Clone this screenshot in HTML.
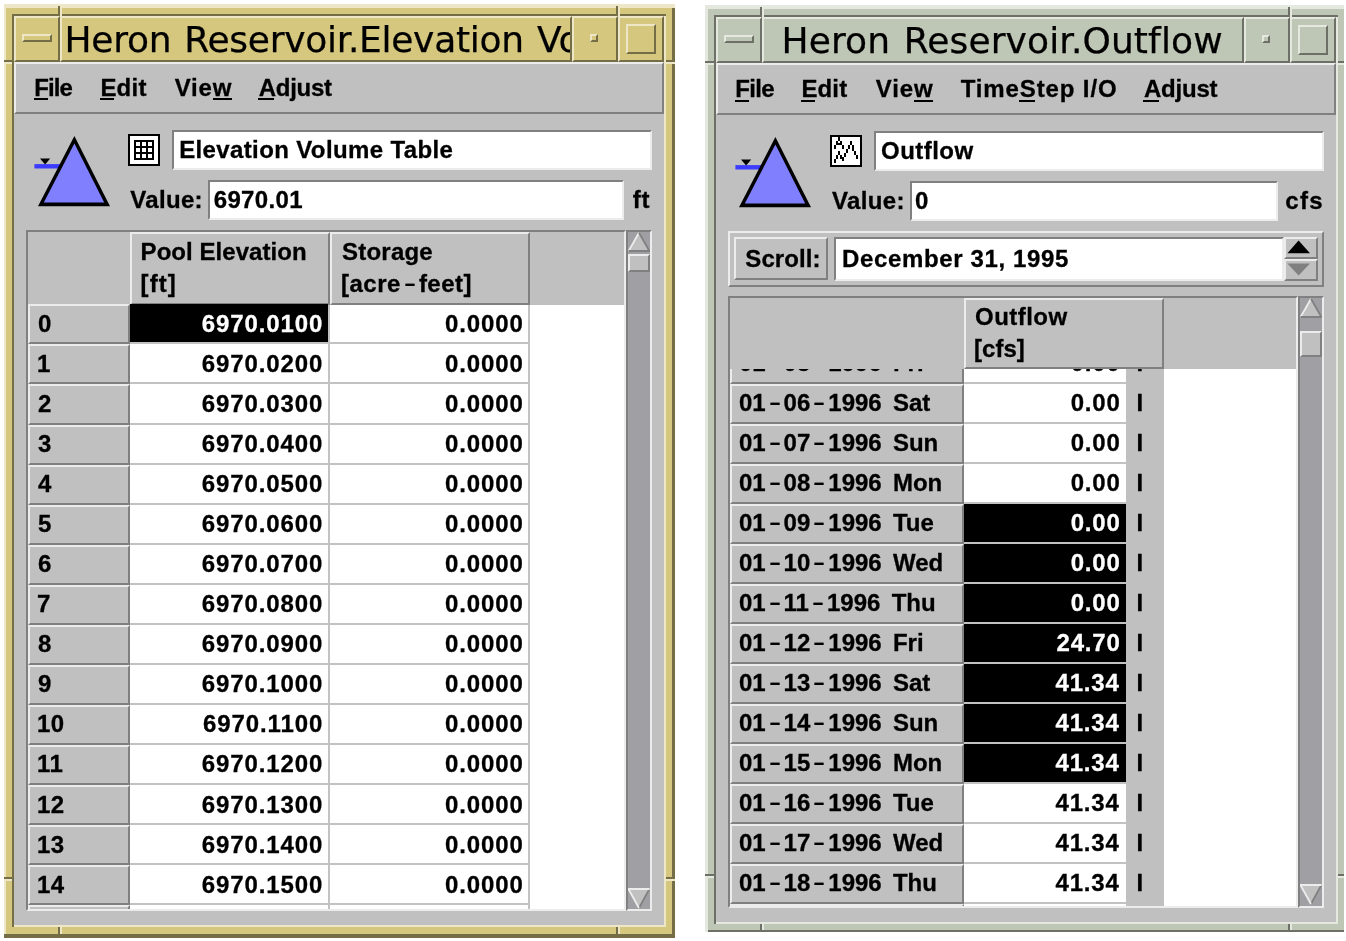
<!DOCTYPE html>
<html lang="en"><head><meta charset="utf-8"><title>Heron Reservoir</title>
<style>
html,body{margin:0;padding:0;background:#fff}
body{width:1346px;height:941px;position:relative;overflow:hidden}
div,svg.a,span.t{position:absolute;box-sizing:border-box}
.fA{background:#d6c77e}.lA{background:#ede7c7}.dA{background:#746d45}
.rbA{background:#d6c77e;border:2px solid;border-color:#ede7c7 #746d45 #746d45 #ede7c7}
.fB{background:#bec6b5}.lB{background:#e4e8df}.dB{background:#6c7067}
.rbB{background:#bec6b5;border:2px solid;border-color:#e4e8df #6c7067 #6c7067 #e4e8df}
.g{background:#c0c0c0}.w{background:#fff}.k{background:#000}.gl{background:#c2c2c2}
.rs{background:#c0c0c0;border:2px solid;border-color:#ececec #808080 #808080 #ececec}
.nob{border-bottom:0}
.fld{background:#fff;border:2px solid;border-color:#808080 #ececec #ececec #808080}
.tb{border:2px solid;border-color:#808080 #ececec #ececec #808080}
.sb{background:#a0a0a4;border:2px solid;border-color:#808080 #ececec #ececec #808080}
.ib{background:#fff;border:2px solid #000}
.t{font:bold 24px/24px "Liberation Sans",sans-serif;color:#000;white-space:pre;-webkit-text-stroke:0.3px #000}
.wt{color:#fff;-webkit-text-stroke-color:#fff}
.h{display:inline-block;font-weight:bold;width:18px;text-align:center;letter-spacing:0;transform:scale(1.45,.78)}
.tt{overflow:hidden}
.ttx{position:absolute;font:36px/40px "DejaVu Sans",sans-serif;color:#000;white-space:pre;-webkit-text-stroke:0.25px #000}
.clip{overflow:hidden}
.win{left:0;top:0;width:0;height:0}
.desk{left:0;top:0;width:1346px;height:941px;background:#fff;will-change:transform}
</style></head>
<body>
<div class="desk">
<div class="win" id="win-elevation">
<div class="fA" style="left:4px;top:4px;width:671px;height:934px;"></div>
<div class="lA" style="left:4px;top:4px;width:671px;height:4px;"></div>
<div class="lA" style="left:4px;top:4px;width:2px;height:934px;"></div>
<div class="dA" style="left:672px;top:8px;width:3px;height:930px;"></div>
<div class="dA" style="left:4px;top:934px;width:671px;height:4px;"></div>
<div class="dA" style="left:12px;top:14px;width:654px;height:2px;"></div>
<div class="dA" style="left:12px;top:14px;width:2px;height:913px;"></div>
<div class="lA" style="left:664px;top:16px;width:2px;height:911px;"></div>
<div class="lA" style="left:14px;top:925px;width:652px;height:2px;"></div>
<div class="dA" style="left:58px;top:6px;width:2px;height:10px;"></div>
<div class="lA" style="left:60px;top:8px;width:2px;height:8px;"></div>
<div class="dA" style="left:58px;top:927px;width:2px;height:9px;"></div>
<div class="lA" style="left:60px;top:927px;width:2px;height:7px;"></div>
<div class="dA" style="left:616px;top:6px;width:2px;height:10px;"></div>
<div class="lA" style="left:618px;top:8px;width:2px;height:8px;"></div>
<div class="dA" style="left:616px;top:927px;width:2px;height:9px;"></div>
<div class="lA" style="left:618px;top:927px;width:2px;height:7px;"></div>
<div class="dA" style="left:4px;top:60px;width:8px;height:2px;"></div>
<div class="lA" style="left:6px;top:62px;width:6px;height:2px;"></div>
<div class="dA" style="left:666px;top:60px;width:9px;height:2px;"></div>
<div class="lA" style="left:666px;top:62px;width:9px;height:2px;"></div>
<div class="dA" style="left:4px;top:877px;width:8px;height:2px;"></div>
<div class="lA" style="left:6px;top:879px;width:6px;height:2px;"></div>
<div class="dA" style="left:666px;top:877px;width:9px;height:2px;"></div>
<div class="lA" style="left:666px;top:879px;width:9px;height:2px;"></div>
<div class="rbA" style="left:14px;top:16px;width:46px;height:46px;"></div>
<div class="rbA" style="left:22px;top:34px;width:30px;height:8px;"></div>
<div class="rbA" style="left:60px;top:16px;width:512px;height:46px;"></div>
<div class="rbA" style="left:572px;top:16px;width:46px;height:46px;"></div>
<div class="rbA" style="left:590px;top:34px;width:8px;height:8px;"></div>
<div class="rbA" style="left:618px;top:16px;width:46px;height:46px;"></div>
<div class="rbA" style="left:626px;top:24px;width:30px;height:30px;"></div>
<div class="g" style="left:14px;top:62px;width:650px;height:863px;"></div>
<div class="tt" style="left:62px;top:18px;width:508px;height:42px"><span class="ttx" style="left:2.5px;top:2px;letter-spacing:-0.28px;word-spacing:2px">Heron Reservoir.Elevation Volume Table</span></div>
<div class="rs" style="left:14px;top:62px;width:650px;height:52px;"></div>
<span class="t" style="left:34.30px;top:76.00px;letter-spacing:-0.97px;">File</span>
<div class="k" style="left:34.4px;top:98px;width:13.4px;height:2px;"></div>
<span class="t" style="left:100.40px;top:76.00px;letter-spacing:0.22px;">Edit</span>
<div class="k" style="left:100.4px;top:98px;width:14.0px;height:2px;"></div>
<span class="t" style="left:174.70px;top:76.00px;letter-spacing:0.84px;">View</span>
<div class="k" style="left:213px;top:98px;width:18.8px;height:2px;"></div>
<span class="t" style="left:258.80px;top:76.00px;letter-spacing:-0.29px;">Adjust</span>
<div class="k" style="left:257.8px;top:98px;width:16.2px;height:2px;"></div>
<svg class="a" style="left:34px;top:130px" width="84" height="80" viewBox="0 0 84 80">
<rect x="0.4" y="34.1" width="26" height="4.4" fill="#3c3cff"/>
<polygon points="40.4,6 76,76.3 4,76.3" fill="#000"/>
<polygon points="40.4,13.4 70.2,72.5 9.8,72.5" fill="#8080ff"/>
<polygon points="6,28.4 16.2,28.4 11.1,34.5" fill="#000"/>
</svg>
<div class="ib" style="left:128px;top:134px;width:32px;height:32px;"></div>
<svg class="a" style="left:128px;top:134px" width="32" height="32"><rect x="6" y="6" width="2" height="20"/><rect x="6" y="6" width="20" height="2"/><rect x="12" y="6" width="2" height="20"/><rect x="6" y="12" width="20" height="2"/><rect x="18" y="6" width="2" height="20"/><rect x="6" y="18" width="20" height="2"/><rect x="24" y="6" width="2" height="20"/><rect x="6" y="24" width="20" height="2"/></svg>
<div class="fld" style="left:172px;top:130px;width:480px;height:40px;"></div>
<span class="t" style="left:179.20px;top:138.00px;letter-spacing:0.37px;">Elevation Volume Table</span>
<span class="t" style="left:130.30px;top:188.00px;letter-spacing:0.32px;">Value:</span>
<div class="fld" style="left:208px;top:180.4px;width:416px;height:40.0px;"></div>
<span class="t" style="left:213.70px;top:188.00px;letter-spacing:0.37px;">6970.01</span>
<span class="t" style="left:632.80px;top:188.00px;letter-spacing:0.80px;">ft</span>
<div class="tb" style="left:26px;top:230px;width:600px;height:681px;"></div>
<div class="g" style="left:28px;top:232px;width:596px;height:73px;"></div>
<div class="w" style="left:130px;top:305px;width:494px;height:604px;"></div>
<div class="rs" style="left:130px;top:232px;width:200px;height:73px;"></div>
<div class="rs" style="left:330px;top:232px;width:200px;height:73px;"></div>
<span class="t" style="left:140.60px;top:240.00px;letter-spacing:0.05px;">Pool Elevation</span>
<span class="t" style="left:140.60px;top:272.00px;letter-spacing:1.04px;">[ft]</span>
<span class="t" style="left:342.00px;top:240.00px;letter-spacing:0.22px;">Storage</span>
<span class="t" style="left:341.00px;top:272.00px;letter-spacing:0.50px;">[acre<b class="h">-</b>feet]</span>
<div class="rs" style="left:28px;top:304.4px;width:102px;height:40.04px;"></div>
<div class="gl" style="left:130px;top:342.44px;width:400px;height:2.0px;"></div>
<span class="t" style="left:37.90px;top:312.00px;letter-spacing:0.60px;">0</span>
<div class="k" style="left:130px;top:304.4px;width:198px;height:38.04px;"></div>
<span class="t wt" style="left:201.70px;top:312.00px;letter-spacing:0.90px;">6970.0100</span>
<span class="t" style="left:445.04px;top:312.00px;letter-spacing:0.90px;">0.0000</span>
<div class="rs" style="left:28px;top:344.44px;width:102px;height:40.04px;"></div>
<div class="gl" style="left:130px;top:382.48px;width:400px;height:2.0px;"></div>
<span class="t" style="left:36.90px;top:352.04px;letter-spacing:0.60px;">1</span>
<span class="t" style="left:201.70px;top:352.04px;letter-spacing:0.90px;">6970.0200</span>
<span class="t" style="left:445.04px;top:352.04px;letter-spacing:0.90px;">0.0000</span>
<div class="rs" style="left:28px;top:384.49px;width:102px;height:40.04px;"></div>
<div class="gl" style="left:130px;top:422.53px;width:400px;height:2.0px;"></div>
<span class="t" style="left:37.90px;top:392.09px;letter-spacing:0.60px;">2</span>
<span class="t" style="left:201.70px;top:392.09px;letter-spacing:0.90px;">6970.0300</span>
<span class="t" style="left:445.04px;top:392.09px;letter-spacing:0.90px;">0.0000</span>
<div class="rs" style="left:28px;top:424.53px;width:102px;height:40.04px;"></div>
<div class="gl" style="left:130px;top:462.57px;width:400px;height:2.0px;"></div>
<span class="t" style="left:37.90px;top:432.13px;letter-spacing:0.60px;">3</span>
<span class="t" style="left:201.70px;top:432.13px;letter-spacing:0.90px;">6970.0400</span>
<span class="t" style="left:445.04px;top:432.13px;letter-spacing:0.90px;">0.0000</span>
<div class="rs" style="left:28px;top:464.57px;width:102px;height:40.04px;"></div>
<div class="gl" style="left:130px;top:502.61px;width:400px;height:2.0px;"></div>
<span class="t" style="left:37.90px;top:472.17px;letter-spacing:0.60px;">4</span>
<span class="t" style="left:201.70px;top:472.17px;letter-spacing:0.90px;">6970.0500</span>
<span class="t" style="left:445.04px;top:472.17px;letter-spacing:0.90px;">0.0000</span>
<div class="rs" style="left:28px;top:504.62px;width:102px;height:40.04px;"></div>
<div class="gl" style="left:130px;top:542.66px;width:400px;height:2.0px;"></div>
<span class="t" style="left:37.90px;top:512.22px;letter-spacing:0.60px;">5</span>
<span class="t" style="left:201.70px;top:512.22px;letter-spacing:0.90px;">6970.0600</span>
<span class="t" style="left:445.04px;top:512.22px;letter-spacing:0.90px;">0.0000</span>
<div class="rs" style="left:28px;top:544.66px;width:102px;height:40.04px;"></div>
<div class="gl" style="left:130px;top:582.7px;width:400px;height:2.0px;"></div>
<span class="t" style="left:37.90px;top:552.26px;letter-spacing:0.60px;">6</span>
<span class="t" style="left:201.70px;top:552.26px;letter-spacing:0.90px;">6970.0700</span>
<span class="t" style="left:445.04px;top:552.26px;letter-spacing:0.90px;">0.0000</span>
<div class="rs" style="left:28px;top:584.7px;width:102px;height:40.04px;"></div>
<div class="gl" style="left:130px;top:622.74px;width:400px;height:2.0px;"></div>
<span class="t" style="left:36.90px;top:592.30px;letter-spacing:0.60px;">7</span>
<span class="t" style="left:201.70px;top:592.30px;letter-spacing:0.90px;">6970.0800</span>
<span class="t" style="left:445.04px;top:592.30px;letter-spacing:0.90px;">0.0000</span>
<div class="rs" style="left:28px;top:624.74px;width:102px;height:40.04px;"></div>
<div class="gl" style="left:130px;top:662.78px;width:400px;height:2.0px;"></div>
<span class="t" style="left:37.90px;top:632.34px;letter-spacing:0.60px;">8</span>
<span class="t" style="left:201.70px;top:632.34px;letter-spacing:0.90px;">6970.0900</span>
<span class="t" style="left:445.04px;top:632.34px;letter-spacing:0.90px;">0.0000</span>
<div class="rs" style="left:28px;top:664.79px;width:102px;height:40.04px;"></div>
<div class="gl" style="left:130px;top:702.83px;width:400px;height:2.0px;"></div>
<span class="t" style="left:37.90px;top:672.39px;letter-spacing:0.60px;">9</span>
<span class="t" style="left:201.70px;top:672.39px;letter-spacing:0.90px;">6970.1000</span>
<span class="t" style="left:445.04px;top:672.39px;letter-spacing:0.90px;">0.0000</span>
<div class="rs" style="left:28px;top:704.83px;width:102px;height:40.04px;"></div>
<div class="gl" style="left:130px;top:742.87px;width:400px;height:2.0px;"></div>
<span class="t" style="left:36.90px;top:712.43px;letter-spacing:0.60px;">10</span>
<span class="t" style="left:203.02px;top:712.43px;letter-spacing:0.90px;">6970.1100</span>
<span class="t" style="left:445.04px;top:712.43px;letter-spacing:0.90px;">0.0000</span>
<div class="rs" style="left:28px;top:744.87px;width:102px;height:40.04px;"></div>
<div class="gl" style="left:130px;top:782.91px;width:400px;height:2.0px;"></div>
<span class="t" style="left:36.90px;top:752.47px;letter-spacing:0.60px;">11</span>
<span class="t" style="left:201.70px;top:752.47px;letter-spacing:0.90px;">6970.1200</span>
<span class="t" style="left:445.04px;top:752.47px;letter-spacing:0.90px;">0.0000</span>
<div class="rs" style="left:28px;top:784.92px;width:102px;height:40.04px;"></div>
<div class="gl" style="left:130px;top:822.96px;width:400px;height:2.0px;"></div>
<span class="t" style="left:36.90px;top:792.52px;letter-spacing:0.60px;">12</span>
<span class="t" style="left:201.70px;top:792.52px;letter-spacing:0.90px;">6970.1300</span>
<span class="t" style="left:445.04px;top:792.52px;letter-spacing:0.90px;">0.0000</span>
<div class="rs" style="left:28px;top:824.96px;width:102px;height:40.04px;"></div>
<div class="gl" style="left:130px;top:863.0px;width:400px;height:2.0px;"></div>
<span class="t" style="left:36.90px;top:832.56px;letter-spacing:0.60px;">13</span>
<span class="t" style="left:201.70px;top:832.56px;letter-spacing:0.90px;">6970.1400</span>
<span class="t" style="left:445.04px;top:832.56px;letter-spacing:0.90px;">0.0000</span>
<div class="rs" style="left:28px;top:865.0px;width:102px;height:40.04px;"></div>
<div class="gl" style="left:130px;top:903.04px;width:400px;height:2.0px;"></div>
<span class="t" style="left:36.90px;top:872.60px;letter-spacing:0.60px;">14</span>
<span class="t" style="left:201.70px;top:872.60px;letter-spacing:0.90px;">6970.1500</span>
<span class="t" style="left:445.04px;top:872.60px;letter-spacing:0.90px;">0.0000</span>
<div class="rs nob" style="left:28px;top:905.04px;width:102px;height:3.96px;"></div>
<div class="gl" style="left:328px;top:305px;width:2px;height:604px;"></div>
<div class="gl" style="left:528px;top:305px;width:2px;height:604px;"></div>
<div class="sb" style="left:626px;top:230px;width:26px;height:681px;"></div>
<svg class="a" style="left:628px;top:232px" width="22" height="20" viewBox="0 0 22 20">
<polygon points="11,0 22,19.4 0,19.4" fill="#c0c0c0"/>
<polyline points="0.6,19 11,0.8" fill="none" stroke="#ececec" stroke-width="1.8"/>
<polyline points="11,0.8 21.4,19 0.6,19" fill="none" stroke="#808080" stroke-width="1.8"/>
</svg>
<svg class="a" style="left:628px;top:888px" width="22" height="21" viewBox="0 0 22 21">
<polygon points="0,0.6 22,0.6 11,21" fill="#c0c0c0"/>
<polyline points="11,20 21.4,1" fill="none" stroke="#808080" stroke-width="1.8"/>
<polyline points="21.6,1 0.4,1 11,20" fill="none" stroke="#ececec" stroke-width="1.8"/>
</svg>
<div class="rs" style="left:628px;top:254px;width:22px;height:18px;"></div>
</div>
<div class="win" id="win-outflow">
<div class="fB" style="left:705px;top:5px;width:639px;height:927px;"></div>
<div class="lB" style="left:705px;top:5px;width:639px;height:4px;"></div>
<div class="lB" style="left:705px;top:5px;width:3px;height:927px;"></div>
<div class="dB" style="left:707.5px;top:930px;width:636.5px;height:2px;"></div>
<div class="dB" style="left:714px;top:15px;width:624px;height:2px;"></div>
<div class="dB" style="left:714px;top:15px;width:2px;height:909px;"></div>
<div class="lB" style="left:1336px;top:17px;width:2px;height:907px;"></div>
<div class="lB" style="left:716px;top:922px;width:622px;height:2px;"></div>
<div class="dB" style="left:760px;top:7px;width:2px;height:10px;"></div>
<div class="lB" style="left:762px;top:9px;width:2px;height:8px;"></div>
<div class="dB" style="left:760px;top:924px;width:2px;height:6px;"></div>
<div class="lB" style="left:762px;top:924px;width:2px;height:6px;"></div>
<div class="dB" style="left:1288px;top:7px;width:2px;height:10px;"></div>
<div class="lB" style="left:1290px;top:9px;width:2px;height:8px;"></div>
<div class="dB" style="left:1288px;top:924px;width:2px;height:6px;"></div>
<div class="lB" style="left:1290px;top:924px;width:2px;height:6px;"></div>
<div class="dB" style="left:705px;top:61px;width:9px;height:2px;"></div>
<div class="lB" style="left:707px;top:63px;width:7px;height:2px;"></div>
<div class="dB" style="left:1338px;top:61px;width:6px;height:2px;"></div>
<div class="lB" style="left:1338px;top:63px;width:6px;height:2px;"></div>
<div class="dB" style="left:705px;top:874px;width:9px;height:2px;"></div>
<div class="lB" style="left:707px;top:876px;width:7px;height:2px;"></div>
<div class="dB" style="left:1338px;top:874px;width:6px;height:2px;"></div>
<div class="lB" style="left:1338px;top:876px;width:6px;height:2px;"></div>
<div class="rbB" style="left:716px;top:17px;width:46px;height:46px;"></div>
<div class="rbB" style="left:724px;top:35px;width:30px;height:8px;"></div>
<div class="rbB" style="left:762px;top:17px;width:482px;height:46px;"></div>
<div class="rbB" style="left:1244px;top:17px;width:46px;height:46px;"></div>
<div class="rbB" style="left:1262px;top:35px;width:8px;height:8px;"></div>
<div class="rbB" style="left:1290px;top:17px;width:46px;height:46px;"></div>
<div class="rbB" style="left:1298px;top:25px;width:30px;height:30px;"></div>
<div class="g" style="left:716px;top:63px;width:620px;height:859px;"></div>
<div class="tt" style="left:764px;top:19px;width:478px;height:42px"><span class="ttx" style="left:17.5px;top:2px;letter-spacing:0.12px;word-spacing:2px">Heron Reservoir.Outflow</span></div>
<div class="rs" style="left:716px;top:63px;width:620px;height:52px;"></div>
<span class="t" style="left:735.30px;top:77.00px;letter-spacing:-0.70px;">File</span>
<div class="k" style="left:735.4px;top:99.5px;width:13.4px;height:2.0px;"></div>
<span class="t" style="left:801.40px;top:77.00px;letter-spacing:0.15px;">Edit</span>
<div class="k" style="left:801.4px;top:99.5px;width:14.0px;height:2.0px;"></div>
<span class="t" style="left:875.70px;top:77.00px;letter-spacing:0.90px;">View</span>
<div class="k" style="left:914px;top:99.5px;width:19px;height:2.0px;"></div>
<span class="t" style="left:960.70px;top:77.00px;letter-spacing:0.88px;">TimeStep I/O</span>
<div class="k" style="left:1019px;top:99.5px;width:15.5px;height:2.0px;"></div>
<span class="t" style="left:1144.00px;top:77.00px;letter-spacing:-0.23px;">Adjust</span>
<div class="k" style="left:1143px;top:99.5px;width:16px;height:2.0px;"></div>
<svg class="a" style="left:735.4px;top:131.4px" width="84" height="80" viewBox="0 0 84 80">
<rect x="0.4" y="34.1" width="26" height="4.4" fill="#3c3cff"/>
<polygon points="40.4,6 76,76.3 4,76.3" fill="#000"/>
<polygon points="40.4,13.4 70.2,72.5 9.8,72.5" fill="#8080ff"/>
<polygon points="6,28.4 16.2,28.4 11.1,34.5" fill="#000"/>
</svg>
<div class="ib" style="left:829.6px;top:135px;width:32.0px;height:32px;"></div>
<svg class="a" style="left:829.6px;top:135px" width="32" height="32"><rect x="8" y="2" width="2" height="4"/><rect x="6" y="6" width="2" height="4"/><rect x="10" y="6" width="2" height="4"/><rect x="8" y="8" width="2" height="2"/><rect x="4" y="10" width="2" height="4"/><rect x="12" y="10" width="2" height="4"/><rect x="18" y="10" width="2" height="4"/><rect x="20" y="6" width="2" height="4"/><rect x="22" y="10" width="2" height="6"/><rect x="16" y="14" width="2" height="4"/><rect x="24" y="16" width="2" height="4"/><rect x="8" y="16" width="2" height="4"/><rect x="14" y="18" width="2" height="4"/><rect x="26" y="20" width="2" height="4"/><rect x="6" y="20" width="2" height="4"/><rect x="10" y="20" width="2" height="4"/><rect x="12" y="22" width="2" height="4"/><rect x="4" y="24" width="2" height="4"/></svg>
<div class="fld" style="left:874px;top:131px;width:450px;height:40px;"></div>
<span class="t" style="left:881.10px;top:139.00px;letter-spacing:0.46px;">Outflow</span>
<span class="t" style="left:832.10px;top:189.00px;letter-spacing:0.32px;">Value:</span>
<div class="fld" style="left:910px;top:181px;width:368px;height:40px;"></div>
<span class="t" style="left:915.00px;top:189.00px;">0</span>
<span class="t" style="left:1285.30px;top:189.00px;letter-spacing:1.33px;">cfs</span>
<div class="rs" style="left:727.5px;top:231px;width:596.5px;height:56px;"></div>
<div class="rs" style="left:733.5px;top:237px;width:94.0px;height:43px;"></div>
<span class="t" style="left:745.30px;top:247.00px;letter-spacing:0.08px;">Scroll:</span>
<div class="fld" style="left:834px;top:237px;width:450px;height:44px;"></div>
<span class="t" style="left:842.00px;top:247.00px;letter-spacing:0.64px;">December 31, 1995</span>
<div class="rs" style="left:1284px;top:237px;width:34px;height:22px;"></div>
<div class="rs" style="left:1284px;top:259px;width:34px;height:22px;"></div>
<svg class="a" style="left:1286px;top:239px" width="30" height="40" viewBox="0 0 30 40">
<polygon points="12.6,1.6 24,14.2 1.4,14.2" fill="#000"/><polygon points="1.4,24.4 24,24.4 12.6,36.4" fill="#808080"/></svg>
<div class="tb" style="left:727.5px;top:295.5px;width:570.0px;height:612.5px;"></div>
<div class="g" style="left:729.5px;top:297.5px;width:566.0px;height:71.5px;"></div>
<div class="w" style="left:963.5px;top:369px;width:332.0px;height:537px;"></div>
<div class="g" style="left:1126px;top:369px;width:37.5px;height:537px;"></div>
<div class="clip" style="left:729.5px;top:369px;width:566px;height:537px">
<div class="rs" style="left:0px;top:-25.44px;width:234px;height:40.04px;"></div>
<div class="gl" style="left:234px;top:12.6px;width:162.5px;height:2.0px;"></div>
<span class="t" style="left:9.40px;top:-18.14px;word-spacing:4.6px;">01<b class="h">-</b>05<b class="h">-</b>1996 Fri</span>
<span class="t" style="left:341.14px;top:-18.14px;letter-spacing:0.80px;">0.00</span>
<span class="t" style="left:407.10px;top:-18.14px;">I</span>
<div class="rs" style="left:0px;top:14.6px;width:234px;height:40.04px;"></div>
<div class="gl" style="left:234px;top:52.64px;width:162.5px;height:2.0px;"></div>
<span class="t" style="left:9.40px;top:21.90px;word-spacing:4.6px;">01<b class="h">-</b>06<b class="h">-</b>1996 Sat</span>
<span class="t" style="left:341.14px;top:21.90px;letter-spacing:0.80px;">0.00</span>
<span class="t" style="left:407.10px;top:21.90px;">I</span>
<div class="rs" style="left:0px;top:54.64px;width:234px;height:40.04px;"></div>
<div class="gl" style="left:234px;top:92.68px;width:162.5px;height:2.0px;"></div>
<span class="t" style="left:9.40px;top:61.94px;word-spacing:4.6px;">01<b class="h">-</b>07<b class="h">-</b>1996 Sun</span>
<span class="t" style="left:341.14px;top:61.94px;letter-spacing:0.80px;">0.00</span>
<span class="t" style="left:407.10px;top:61.94px;">I</span>
<div class="rs" style="left:0px;top:94.69px;width:234px;height:40.04px;"></div>
<div class="gl" style="left:234px;top:132.73px;width:162.5px;height:2.0px;"></div>
<span class="t" style="left:9.40px;top:101.99px;word-spacing:4.6px;">01<b class="h">-</b>08<b class="h">-</b>1996 Mon</span>
<span class="t" style="left:341.14px;top:101.99px;letter-spacing:0.80px;">0.00</span>
<span class="t" style="left:407.10px;top:101.99px;">I</span>
<div class="rs" style="left:0px;top:134.73px;width:234px;height:40.04px;"></div>
<div class="gl" style="left:234px;top:172.77px;width:162.5px;height:2.0px;"></div>
<div class="k" style="left:234px;top:134.73px;width:162.5px;height:38.04px;"></div>
<span class="t" style="left:9.40px;top:142.03px;word-spacing:4.6px;">01<b class="h">-</b>09<b class="h">-</b>1996 Tue</span>
<span class="t wt" style="left:341.14px;top:142.03px;letter-spacing:0.80px;">0.00</span>
<span class="t" style="left:407.10px;top:142.03px;">I</span>
<div class="rs" style="left:0px;top:174.77px;width:234px;height:40.04px;"></div>
<div class="gl" style="left:234px;top:212.81px;width:162.5px;height:2.0px;"></div>
<div class="k" style="left:234px;top:174.77px;width:162.5px;height:38.04px;"></div>
<span class="t" style="left:9.40px;top:182.07px;word-spacing:4.6px;">01<b class="h">-</b>10<b class="h">-</b>1996 Wed</span>
<span class="t wt" style="left:341.14px;top:182.07px;letter-spacing:0.80px;">0.00</span>
<span class="t" style="left:407.10px;top:182.07px;">I</span>
<div class="rs" style="left:0px;top:214.82px;width:234px;height:40.04px;"></div>
<div class="gl" style="left:234px;top:252.86px;width:162.5px;height:2.0px;"></div>
<div class="k" style="left:234px;top:214.82px;width:162.5px;height:38.04px;"></div>
<span class="t" style="left:9.40px;top:222.12px;word-spacing:4.6px;">01<b class="h">-</b>11<b class="h">-</b>1996 Thu</span>
<span class="t wt" style="left:341.14px;top:222.12px;letter-spacing:0.80px;">0.00</span>
<span class="t" style="left:407.10px;top:222.12px;">I</span>
<div class="rs" style="left:0px;top:254.86px;width:234px;height:40.04px;"></div>
<div class="gl" style="left:234px;top:292.9px;width:162.5px;height:2.0px;"></div>
<div class="k" style="left:234px;top:254.86px;width:162.5px;height:38.04px;"></div>
<span class="t" style="left:9.40px;top:262.16px;word-spacing:4.6px;">01<b class="h">-</b>12<b class="h">-</b>1996 Fri</span>
<span class="t wt" style="left:326.99px;top:262.16px;letter-spacing:0.80px;">24.70</span>
<span class="t" style="left:407.10px;top:262.16px;">I</span>
<div class="rs" style="left:0px;top:294.9px;width:234px;height:40.04px;"></div>
<div class="gl" style="left:234px;top:332.94px;width:162.5px;height:2.0px;"></div>
<div class="k" style="left:234px;top:294.9px;width:162.5px;height:38.04px;"></div>
<span class="t" style="left:9.40px;top:302.20px;word-spacing:4.6px;">01<b class="h">-</b>13<b class="h">-</b>1996 Sat</span>
<span class="t wt" style="left:325.99px;top:302.20px;letter-spacing:0.80px;">41.34</span>
<span class="t" style="left:407.10px;top:302.20px;">I</span>
<div class="rs" style="left:0px;top:334.94px;width:234px;height:40.04px;"></div>
<div class="gl" style="left:234px;top:372.98px;width:162.5px;height:2.0px;"></div>
<div class="k" style="left:234px;top:334.94px;width:162.5px;height:38.04px;"></div>
<span class="t" style="left:9.40px;top:342.24px;word-spacing:4.6px;">01<b class="h">-</b>14<b class="h">-</b>1996 Sun</span>
<span class="t wt" style="left:325.99px;top:342.24px;letter-spacing:0.80px;">41.34</span>
<span class="t" style="left:407.10px;top:342.24px;">I</span>
<div class="rs" style="left:0px;top:374.99px;width:234px;height:40.04px;"></div>
<div class="gl" style="left:234px;top:413.03px;width:162.5px;height:2.0px;"></div>
<div class="k" style="left:234px;top:374.99px;width:162.5px;height:38.04px;"></div>
<span class="t" style="left:9.40px;top:382.29px;word-spacing:4.6px;">01<b class="h">-</b>15<b class="h">-</b>1996 Mon</span>
<span class="t wt" style="left:325.99px;top:382.29px;letter-spacing:0.80px;">41.34</span>
<span class="t" style="left:407.10px;top:382.29px;">I</span>
<div class="rs" style="left:0px;top:415.03px;width:234px;height:40.04px;"></div>
<div class="gl" style="left:234px;top:453.07px;width:162.5px;height:2.0px;"></div>
<span class="t" style="left:9.40px;top:422.33px;word-spacing:4.6px;">01<b class="h">-</b>16<b class="h">-</b>1996 Tue</span>
<span class="t" style="left:325.99px;top:422.33px;letter-spacing:0.80px;">41.34</span>
<span class="t" style="left:407.10px;top:422.33px;">I</span>
<div class="rs" style="left:0px;top:455.07px;width:234px;height:40.04px;"></div>
<div class="gl" style="left:234px;top:493.11px;width:162.5px;height:2.0px;"></div>
<span class="t" style="left:9.40px;top:462.37px;word-spacing:4.6px;">01<b class="h">-</b>17<b class="h">-</b>1996 Wed</span>
<span class="t" style="left:325.99px;top:462.37px;letter-spacing:0.80px;">41.34</span>
<span class="t" style="left:407.10px;top:462.37px;">I</span>
<div class="rs" style="left:0px;top:495.12px;width:234px;height:40.04px;"></div>
<div class="gl" style="left:234px;top:533.16px;width:162.5px;height:2.0px;"></div>
<span class="t" style="left:9.40px;top:502.42px;word-spacing:4.6px;">01<b class="h">-</b>18<b class="h">-</b>1996 Thu</span>
<span class="t" style="left:325.99px;top:502.42px;letter-spacing:0.80px;">41.34</span>
<span class="t" style="left:407.10px;top:502.42px;">I</span>
<div class="rs" style="left:0px;top:535.16px;width:234px;height:40.04px;"></div>
</div>
<div class="rs" style="left:963.5px;top:297.5px;width:200.0px;height:71.5px;"></div>
<span class="t" style="left:975.10px;top:305.00px;letter-spacing:0.46px;">Outflow</span>
<span class="t" style="left:974.10px;top:336.50px;">[cfs]</span>
<div class="sb" style="left:1298px;top:295.5px;width:26px;height:612.5px;"></div>
<svg class="a" style="left:1300px;top:297.5px" width="22" height="20" viewBox="0 0 22 20">
<polygon points="11,0 22,19.4 0,19.4" fill="#c0c0c0"/>
<polyline points="0.6,19 11,0.8" fill="none" stroke="#ececec" stroke-width="1.8"/>
<polyline points="11,0.8 21.4,19 0.6,19" fill="none" stroke="#808080" stroke-width="1.8"/>
</svg>
<svg class="a" style="left:1300px;top:884px" width="22" height="21" viewBox="0 0 22 21">
<polygon points="0,0.6 22,0.6 11,21" fill="#c0c0c0"/>
<polyline points="11,20 21.4,1" fill="none" stroke="#808080" stroke-width="1.8"/>
<polyline points="21.6,1 0.4,1 11,20" fill="none" stroke="#ececec" stroke-width="1.8"/>
</svg>
<div class="rs" style="left:1300px;top:331px;width:22px;height:26px;"></div>
</div>
</div>
</body></html>
